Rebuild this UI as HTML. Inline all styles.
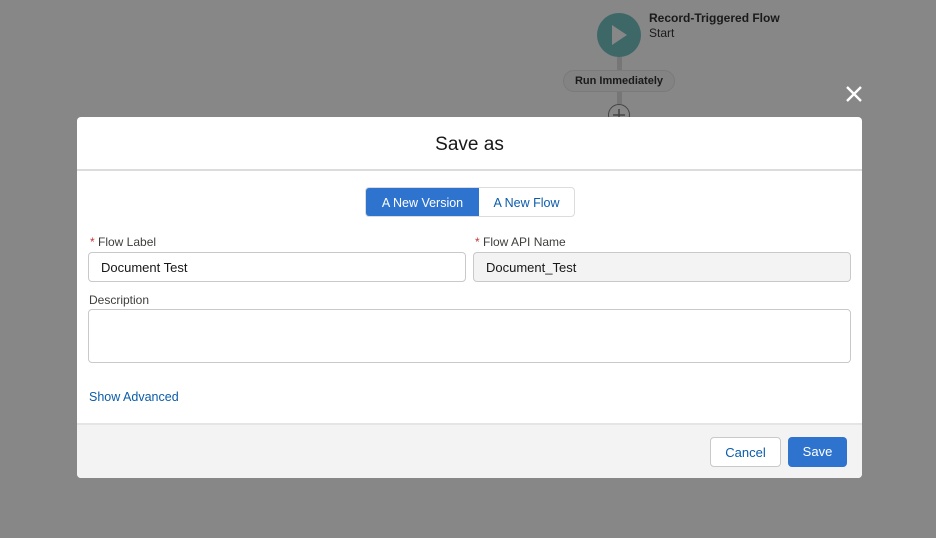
<!DOCTYPE html>
<html><head><meta charset="utf-8"><style>
*{box-sizing:border-box;margin:0;padding:0}
body{width:936px;height:538px;background:#878787;font-family:"Liberation Sans",sans-serif;position:relative;overflow:hidden;color:#181818}
.abs{position:absolute}
.modal{left:77px;top:117px;width:785px;height:361px;background:#fff;border-radius:4px;overflow:hidden}
.hdr{height:54px;border-bottom:2px solid #dcdcdc;text-align:center;font-size:19px;line-height:56px;color:#181818}
.lbl{font-size:12px;color:#3e3e3c}
.star{color:#c23934}
.inp{height:30px;border:1px solid #c9c9c9;border-radius:4px;font-size:13px;line-height:29px;padding-left:12px}
.ftr{left:0;top:306px;width:785px;height:55px;background:#f3f3f3;border-top:2px solid #e5e5e5}
.btn{height:30px;border-radius:4px;font-size:13px;line-height:29px;text-align:center}
</style></head><body>
<div class="abs" style="left:617px;top:52px;width:5px;height:52px;background:#767676"></div>
<div class="abs" style="left:597px;top:13px;width:44px;height:44px;border-radius:50%;background:#3d6867"></div>
<svg class="abs" style="left:611px;top:24px" width="18" height="22"><path d="M1 1 L16 11 L1 21Z" fill="#878787"/></svg>
<div class="abs" style="left:649px;top:11px;font-size:12px;font-weight:bold;color:#1a1a1a">Record-Triggered Flow</div>
<div class="abs" style="left:649px;top:26px;font-size:12px;color:#1a1a1a">Start</div>
<div class="abs" style="left:563px;top:70px;width:112px;height:22px;border-radius:11px;background:#838383;border:1px solid #7a7a7a;font-size:11px;font-weight:bold;line-height:21px;text-align:center;color:#1a1a1a">Run Immediately</div>
<div class="abs" style="left:608px;top:104px;width:22px;height:22px;border-radius:50%;border:1.5px solid #444;background:#878787"></div>
<svg class="abs" style="left:608px;top:104px" width="22" height="22"><path d="M11 5V17M5 11H17" stroke="#444" stroke-width="1.5"/></svg>
<svg class="abs" style="left:845px;top:85px" width="18" height="18"><path d="M2 2L16 16M16 2L2 16" stroke="#fff" stroke-width="2.4"/></svg>
<div class="abs modal">
 <div class="hdr">Save as</div>
 <div class="abs" style="left:288px;top:70px;width:210px;height:30px;border:1px solid #dcdcdc;border-radius:4px;overflow:hidden;display:flex">
  <div style="width:113px;background:#2e74cf;color:#fff;font-size:12.5px;line-height:30px;text-align:center">A New Version</div>
  <div style="flex:1;color:#0b5cab;font-size:12.5px;line-height:30px;text-align:center">A New Flow</div>
 </div>
 <div class="abs lbl" style="left:13px;top:118px"><span class="star">*</span> Flow Label</div>
 <div class="abs inp" style="left:11px;top:135px;width:378px">Document Test</div>
 <div class="abs lbl" style="left:398px;top:118px"><span class="star">*</span> Flow API Name</div>
 <div class="abs inp" style="left:396px;top:135px;width:378px;background:#f3f3f3">Document_Test</div>
 <div class="abs lbl" style="left:12px;top:176px">Description</div>
 <div class="abs inp" style="left:11px;top:192px;width:763px;height:54px"></div>
 <div class="abs" style="left:12px;top:273px;font-size:12.5px;color:#0b5cab">Show Advanced</div>
 <div class="abs ftr">
  <div class="abs btn" style="left:633px;top:12px;width:71px;background:#fff;border:1px solid #c9c9c9;color:#0b5cab">Cancel</div>
  <div class="abs btn" style="left:711px;top:12px;width:59px;background:#2e74cf;color:#fff;line-height:30px">Save</div>
 </div>
</div>
</body></html>
